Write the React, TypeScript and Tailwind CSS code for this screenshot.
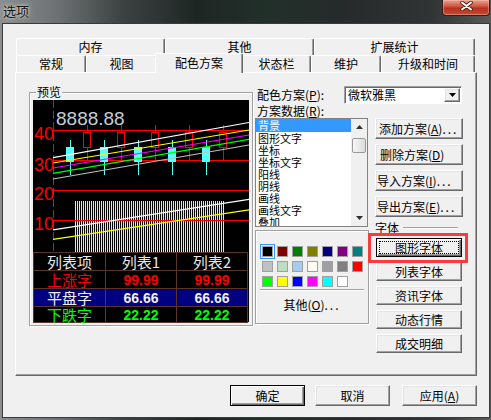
import React from "react";

const btn =
  "bg-[#f0f0f0] border border-t-white border-l-white border-r-[#696969] border-b-[#696969] shadow-[inset_-1px_-1px_0_#a0a0a0,inset_1px_1px_0_#e3e3e3]";
const btnDefault =
  "bg-[#f0f0f0] border border-black shadow-[inset_1px_1px_0_#fff,inset_-1px_-1px_0_#696969,inset_-2px_-2px_0_#a0a0a0]";
const tab =
  "flex items-center justify-center bg-[#f0f0f0] border-t border-l border-white border-r border-r-[#696969] shadow-[inset_-1px_0_0_#a0a0a0] rounded-t-[2px] leading-[14px]";
const etched = "border border-[#a0a0a0] shadow-[inset_1px_1px_0_#fff,1px_1px_0_#fff]";

function Dots() {
  return <span className="tracking-[2px]">...</span>;
}

function Chart() {
  const cyan = [33, 67, 101, 135, 169];
  const red = [50, 84, 118, 152, 186];
  return (
    <svg width="216" height="152" className="block" shapeRendering="crispEdges">
      <defs>
        <pattern id="vs" width="2" height="10" patternUnits="userSpaceOnUse">
          <rect width="1" height="10" fill="#ffff00" />
        </pattern>
      </defs>
      <rect width="216" height="152" fill="#000" />
      <rect x="42" y="101" width="150" height="51" fill="url(#vs)" />
      {[30.5, 60.5, 90.5, 120.5].map((y) => (
        <line key={y} x1="20" y1={y} x2="216" y2={y} stroke="#ff0000" />
      ))}
      <line x1="20.5" y1="0" x2="20.5" y2="152" stroke="#ff0000" strokeDasharray="8 3" />
      {cyan.map((x) => (
        <g key={x}>
          <line x1={x + 4.5} y1="40" x2={x + 4.5} y2="75" stroke="#55ffff" />
          <rect x={x} y="47" width="8" height="15" fill="#55ffff" />
        </g>
      ))}
      {red.map((x) => (
        <g key={x}>
          <line x1={x + 4.5} y1="25" x2={x + 4.5} y2="32" stroke="#ff0000" />
          <line x1={x + 4.5} y1="48" x2={x + 4.5} y2="60" stroke="#ff0000" />
          <rect x={x + 0.5} y="32.5" width="7" height="15" fill="none" stroke="#ff0000" />
        </g>
      ))}
      <g shapeRendering="auto" strokeWidth="1.2">
        <line x1="20" y1="57.7" x2="216" y2="22.5" stroke="#ffffff" />
        <line x1="20" y1="63" x2="216" y2="30" stroke="#ffff00" />
        <line x1="20" y1="68" x2="216" y2="35" stroke="#ff00ff" />
        <line x1="20" y1="73.4" x2="216" y2="39.3" stroke="#00ff00" />
        <line x1="20" y1="79" x2="216" y2="45" stroke="#c0c0c0" />
        <line x1="20" y1="129.8" x2="216" y2="99.3" stroke="#ffffff" />
        <line x1="20" y1="139.4" x2="216" y2="109.9" stroke="#ffff00" />
      </g>
      <g fontFamily="'Liberation Sans', Arial, sans-serif" shapeRendering="auto">
        <text x="23" y="25" fontSize="19" fill="#c4ccd6">8888.88</text>
        <text x="1" y="40" fontSize="18" fill="#ff0000">40</text>
        <text x="1" y="71" fontSize="18" fill="#ff0000">30</text>
        <text x="1" y="100" fontSize="18" fill="#ff0000">20</text>
        <text x="1" y="130" fontSize="18" fill="#ff0000">10</text>
      </g>
    </svg>
  );
}

function Table() {
  const rows = [
    { a: "列表项", b: "列表1", c: "列表2", color: "text-[#e8e8e8]", bg: "", num: false },
    { a: "上涨字", b: "99.99", c: "99.99", color: "text-[#ff0000]", bg: "", num: true },
    { a: "平盘字", b: "66.66", c: "66.66", color: "text-[#f0f0f0]", bg: "bg-[#000080]", num: true },
    { a: "下跌字", b: "22.22", c: "22.22", color: "text-[#00ff00]", bg: "", num: true },
  ];
  const numCls = "font-['Liberation_Sans',Arial,sans-serif] font-bold text-[14px]";
  return (
    <div className="w-[215px] border-t border-l border-r border-[#5a3424]">
      {rows.map((r, i) => (
        <div
          key={i}
          className={`grid grid-cols-[72px_71px_1fr] border-b border-[#5a3424] ${i === 3 ? "h-[16px]" : "h-[18px]"} ${r.bg}`}
        >
          <div className={`border-r border-[#5a3424] flex items-center justify-center text-[15px] leading-[16px] ${r.color}`}>{r.a}</div>
          <div className={`border-r border-[#5a3424] flex items-center justify-center ${r.num ? numCls : "text-[15px]"} leading-[16px] ${r.color}`}>{r.b}</div>
          <div className={`flex items-center justify-center ${r.num ? numCls : "text-[15px]"} leading-[16px] ${r.color}`}>{r.c}</div>
        </div>
      ))}
    </div>
  );
}

function ScrollArrow({ down }: { down?: boolean }) {
  return (
    <div className="h-[16px] flex items-center justify-center">
      <svg width="7" height="4" viewBox="0 0 7 4">
        {down ? <path d="M0 0H7L3.5 4Z" fill="#303030" /> : <path d="M0 4H7L3.5 0Z" fill="#303030" />}
      </svg>
    </div>
  );
}

function ListBox() {
  const items = ["背景", "图形文字", "坐标", "坐标文字", "阳线", "阴线", "画线", "画线文字", "叠加"];
  return (
    <div className="w-[113px] h-[109px] border border-[#828282] bg-white flex">
      <div className="flex-1 overflow-hidden">
        {items.map((t, i) => (
          <div
            key={t}
            className={`h-[12px] leading-[12px] text-[11px] pl-[2px] whitespace-nowrap ${i === 0 ? "bg-[#3399ff] text-white h-[13px]" : ""}`}
          >
            {t}
          </div>
        ))}
      </div>
      <div className="w-[16px] bg-[#f0f0f0] flex flex-col">
        <ScrollArrow />
        <div className="flex-1">
          <div className="mt-[3px] mx-[1px] h-[15px] border border-[#9a9a9a] rounded-[2px] bg-[linear-gradient(90deg,#f6f6f6,#dcdcdc)]" />
        </div>
        <ScrollArrow down />
      </div>
    </div>
  );
}

function Palette() {
  const colors = [
    "#000000", "#800000", "#008000", "#808000", "#000080", "#800080", "#008080",
    "#c0c0c0", "#c0dcc0", "#a6caf0", "#fffbf0", "#a0a0a4", "#808080", "#ff0000",
    "#00ff00", "#ffff00", "#0000ff", "#ff00ff", "#00ffff", "#ffffff",
  ];
  return (
    <div className={`mt-[3px] w-[114px] h-[94px] ${etched} pt-[15px]`}>
      <div className="ml-[6px] grid grid-cols-[repeat(7,11px)] gap-[4px]">
        {colors.map((c, i) => (
          <div
            key={i}
            className={`w-[11px] h-[11px] border border-[#a0a0a0] ${i === 0 ? "outline outline-1 outline-offset-1 outline-[#3399ff]" : ""}`}
            style={{ backgroundColor: c }}
          />
        ))}
      </div>
      <div className="mt-[2px] mx-[4px] h-[2px] border-t border-t-[#a0a0a0] border-b border-b-white" />
      <div className="mt-[7px] text-center leading-[14px]">
        其他(<span className="underline">O</span>)<Dots />
      </div>
    </div>
  );
}

export default function App() {
  return (
    <div className="w-[491px] h-[420px] overflow-hidden bg-[linear-gradient(90deg,#8b8f90_0%,#6c7072_12%,#3c4242_25%,#1e2624_40%,#22302a_55%,#262a2a_70%,#303434_88%,#5a5a5a_100%)] font-['Noto_Sans_CJK_SC','Noto_Sans',sans-serif] text-[12px] text-black">
      {/* title bar */}
      <div className="h-[23px] flex items-start justify-between">
        <div className="pl-[3px] pt-[4px] leading-[14px] text-[13px] text-[#101010] [text-shadow:0_0_5px_rgba(255,255,255,0.8),0_0_2px_rgba(255,255,255,0.6)]">
          选项
        </div>
        <div className="mr-[1px] w-[48px] h-[16px] rounded-b-[4px] border border-t-0 border-[#3b1a14] bg-[linear-gradient(180deg,#e6a192_0%,#d05a44_40%,#b8321e_55%,#c44a34_100%)] flex items-start justify-center pt-[1px] shadow-[inset_0_0_0_1px_rgba(255,200,190,0.4)]">
          <svg width="13" height="10" viewBox="0 0 13 10">
            <path d="M2 1.5L11 8.5M11 1.5L2 8.5" stroke="#4a1a10" strokeWidth="3.6" strokeLinecap="round" />
            <path d="M2 1.5L11 8.5M11 1.5L2 8.5" stroke="#ffffff" strokeWidth="2" strokeLinecap="round" />
          </svg>
        </div>
      </div>

      {/* client */}
      <div className="ml-[2px] w-[488px] h-[395px] border border-[#3a3a3a] bg-[#f0f0f0] pt-[14px]">
        {/* tabs */}
        <div className="ml-[13px] w-[459px]">
          <div className="flex h-[17px]">
            <div className={`${tab} w-[149px]`}>内存</div>
            <div className={`${tab} w-[149px]`}>其他</div>
            <div className={`${tab} w-[161px]`}>扩展统计</div>
          </div>
          <div className="flex h-[17px] items-start">
            <div className={`${tab} w-[70px] h-[17px]`}>常规</div>
            <div className={`${tab} w-[71px] h-[17px]`}>视图</div>
            <div className={`${tab} relative z-10 -ml-[2px] -mr-[1px] -mt-[2px] w-[88px] h-[20px] pb-[1px]`}>配色方案</div>
            <div className={`${tab} w-[69px] h-[17px]`}>状态栏</div>
            <div className={`${tab} w-[70px] h-[17px]`}>维护</div>
            <div className={`${tab} w-[94px] h-[17px]`}>升级和时间</div>
          </div>
        </div>

        {/* panel */}
        <div className="ml-[12px] w-[462px] h-[304px] border border-t-white border-l-white border-r-[#696969] border-b-[#696969] shadow-[inset_-1px_-1px_0_#a0a0a0] flex items-start">
          {/* preview group */}
          <div className={`relative ml-[13px] mt-[19px] w-[224px] h-[234px] ${etched}`}>
            <div className="absolute -top-[8px] left-[6px] px-[1px] bg-[#f0f0f0] leading-[14px]">预览</div>
            <div className="ml-[3px] mt-[7px] w-[216px] h-[222px] bg-black">
              <Chart />
              <Table />
            </div>
          </div>

          {/* right column */}
          <div className="ml-[2px] mt-[13px] w-[208px]">
            <div className="flex items-center h-[18px]">
              <div className="w-[89px] pl-[2px] leading-[14px] whitespace-nowrap">
                配色方案(<span className="underline">P</span>):
              </div>
              <div className="w-[118px] h-[18px] bg-white border border-t-[#a0a0a0] border-l-[#a0a0a0] border-r-white border-b-white shadow-[inset_1px_1px_0_#696969] flex items-center">
                <span className="pl-[3px] flex-1 leading-[14px]">微软雅黑</span>
                <div className={`w-[16px] h-[14px] mr-[1px] ${btn} flex items-center justify-center`}>
                  <svg width="7" height="4" viewBox="0 0 7 4">
                    <path d="M0 0H7L3.5 4Z" fill="#000" />
                  </svg>
                </div>
              </div>
            </div>
            <div className="h-[14px] pl-[2px] leading-[14px] whitespace-nowrap">
              方案数据(<span className="underline">R</span>):
            </div>
            <div className="flex items-start">
              <div className="w-[114px]">
                <ListBox />
                <Palette />
              </div>
              <div className="ml-[6px] w-[88px]">
                <div className="flex flex-col gap-[5px]">
                  <div className={`h-[21px] ${btn} flex items-center pl-[3px] whitespace-nowrap leading-[14px]`}>
                    添加方案(<span className="underline">A</span>)<Dots />
                  </div>
                  <div className={`h-[21px] ${btn} flex items-center pl-[4px] whitespace-nowrap leading-[14px]`}>
                    删除方案(<span className="underline">D</span>)
                  </div>
                  <div className={`h-[21px] ${btn} flex items-center pl-[1px] whitespace-nowrap leading-[14px]`}>
                    导入方案(<span className="underline">I</span>)<Dots />
                  </div>
                  <div className={`h-[21px] ${btn} flex items-center pl-[1px] whitespace-nowrap leading-[14px]`}>
                    导出方案(<span className="underline">E</span>)<Dots />
                  </div>
                </div>
                <div className="mt-[4px] h-[13px] flex items-center">
                  <span className="leading-[13px]">字体</span>
                  <div className="ml-[4px] mr-[5px] flex-1 h-[2px] border-t border-t-[#a0a0a0] border-b border-b-white" />
                </div>
                <div className="mt-[4px] ml-[1px] w-[86px] flex flex-col gap-[5px]">
                  <div className="relative">
                    <div className={`h-[19px] ${btnDefault} flex p-[2px]`}>
                      <span className="flex-1 border border-dotted border-black flex items-center justify-center leading-[13px]">
                        图形字体
                      </span>
                    </div>
                    <div className="absolute -left-[8px] -top-[5px] -right-[6px] -bottom-[6px] border-[3px] border-[#f63c3c]" />
                  </div>
                  {["列表字体", "资讯字体", "动态行情", "成交明细"].map((t) => (
                    <div key={t} className={`h-[19px] ${btn} flex items-center justify-center leading-[14px]`}>
                      {t}
                    </div>
                  ))}
                </div>
              </div>
            </div>
          </div>
        </div>

        {/* bottom buttons */}
        <div className="mt-[9px] flex">
          <div className={`ml-[227px] w-[75px] h-[21px] ${btnDefault} flex items-center justify-center leading-[14px]`}>确定</div>
          <div className={`ml-[10px] w-[75px] h-[21px] ${btn} flex items-center justify-center leading-[14px]`}>取消</div>
          <div className={`ml-[12px] w-[75px] h-[21px] ${btn} flex items-center justify-center leading-[14px]`}>
            应用(<span className="underline">A</span>)
          </div>
        </div>
      </div>
    </div>
  );
}
